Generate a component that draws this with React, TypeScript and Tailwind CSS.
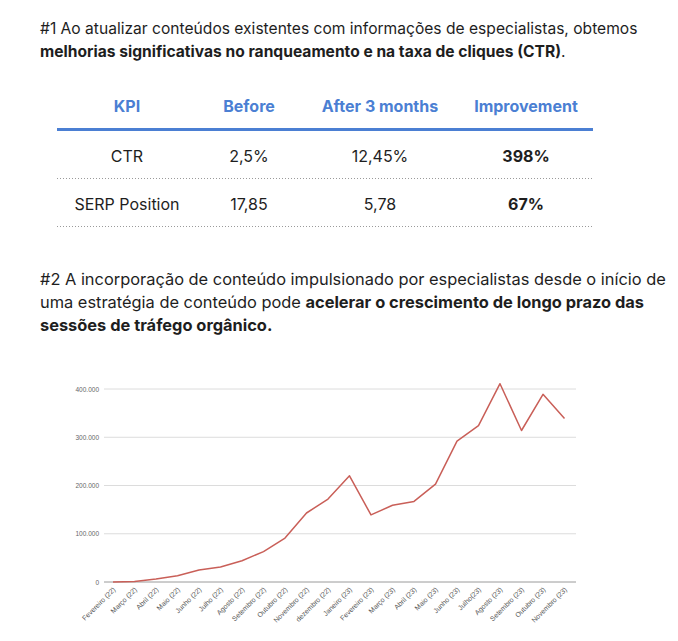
const rows = [
  { kpi: 'CTR', before: '2,5%', after: '12,45%', improvement: '398%' },
  { kpi: 'SERP Position', before: '17,85', after: '5,78', improvement: '67%' },
];

const months = [
  'Fevereiro (22)', 'Março (22)', 'Abril (22)', 'Maio (22)', 'Junho (22)', 'Julho (22)',
  'Agosto (22)', 'Setembro (22)', 'Outubro (22)', 'Novembro (22)', 'dezembro (22)', 'Janeiro (23)',
  'Fevereiro (23)', 'Março (23)', 'Abril (23)', 'Maio (23)', 'Junho (23)', 'Julho(23)',
  'Agosto (23)', 'Setembro (23)', 'Outubro (23)', 'Novembro (23)',
];

// sessions in thousands
const sessions = [
  0, 1, 6, 13, 25, 31, 44, 63, 91, 143, 172, 220,
  139, 159, 167, 203, 292, 324, 411, 314, 389, 339,
];

const xOf = (i: number) => 73 + i * 21.5;
const yOf = (v: number) => 213 - v * 0.4825;

function TrafficChart() {
  const points = sessions.map((v, i) => `${xOf(i)},${yOf(v)}`).join(' ');
  const ticks = [0, 100, 200, 300, 400];

  return (
    <svg width={560} height={271} className="block ml-[40px]" style={{ fontFamily: '"Liberation Sans", Arial, sans-serif' }}>
      {ticks.map((t) => (
        <g key={t}>
          <line
            x1={64}
            x2={536}
            y1={yOf(t)}
            y2={yOf(t)}
            stroke={t === 0 ? '#9a9a9a' : '#dcdcdc'}
            strokeWidth={1}
          />
          <text x={59} y={yOf(t) + 2.5} fontSize={6.5} fill="#666" textAnchor="end">
            {t === 0 ? '0' : `${t}.000`}
          </text>
        </g>
      ))}
      <polyline points={points} fill="none" stroke="#c95f58" strokeWidth={1.5} strokeLinejoin="round" />
      {months.map((m, i) => (
        <text
          key={m}
          x={xOf(i) + 3}
          y={yOf(0) + 8}
          fontSize={7}
          fill="#555"
          textAnchor="end"
          transform={`rotate(-45 ${xOf(i) + 3} ${yOf(0) + 8})`}
        >
          {m}
        </text>
      ))}
    </svg>
  );
}

export default function App() {
  return (
    <div className="w-[678px] h-[641px] bg-white text-[#1e1e1e] overflow-hidden" style={{ fontFamily: 'Inter, "Noto Sans", sans-serif' }}>
      <p className="pt-[17px] pl-[40px] pr-[20px] text-[15.6px] leading-[23px]">
        #1 Ao atualizar conteúdos existentes com informações de especialistas, obtemos{' '}
        <strong className="font-bold">melhorias significativas no ranqueamento e na taxa de cliques (CTR)</strong>.
      </p>

      {/* KPI table */}
      <div className="ml-[57px] mt-[31px] w-[536px]">
        <div className="grid grid-cols-[140px_104px_158px_134px] text-center font-bold text-[16px] leading-[24px] text-[#4b7fd3] pb-[10px] border-b-[3px] border-[#4b7fd3]">
          <div>KPI</div>
          <div>Before</div>
          <div>After 3 months</div>
          <div>Improvement</div>
        </div>
        {rows.map((r) => (
          <div key={r.kpi}>
            <div className="grid grid-cols-[140px_104px_158px_134px] text-center text-[16px] leading-[24px] pt-[13px] pb-[10px]">
              <div>{r.kpi}</div>
              <div>{r.before}</div>
              <div>{r.after}</div>
              <div className="font-bold">{r.improvement}</div>
            </div>
            <div className="h-px bg-[linear-gradient(to_right,#9a9a9a_1px,transparent_1px)] bg-[length:3px_1px]" />
          </div>
        ))}
      </div>

      <p className="pt-[41px] pl-[40px] pr-[8px] text-[16.4px] leading-[23px]">
        #2 A incorporação de conteúdo impulsionado por especialistas desde o início de uma estratégia de conteúdo pode{' '}
        <strong className="font-bold">acelerar o crescimento de longo prazo das sessões de tráfego orgânico.</strong>
      </p>

      <div className="mt-[32px]">
        <TrafficChart />
      </div>
    </div>
  );
}
